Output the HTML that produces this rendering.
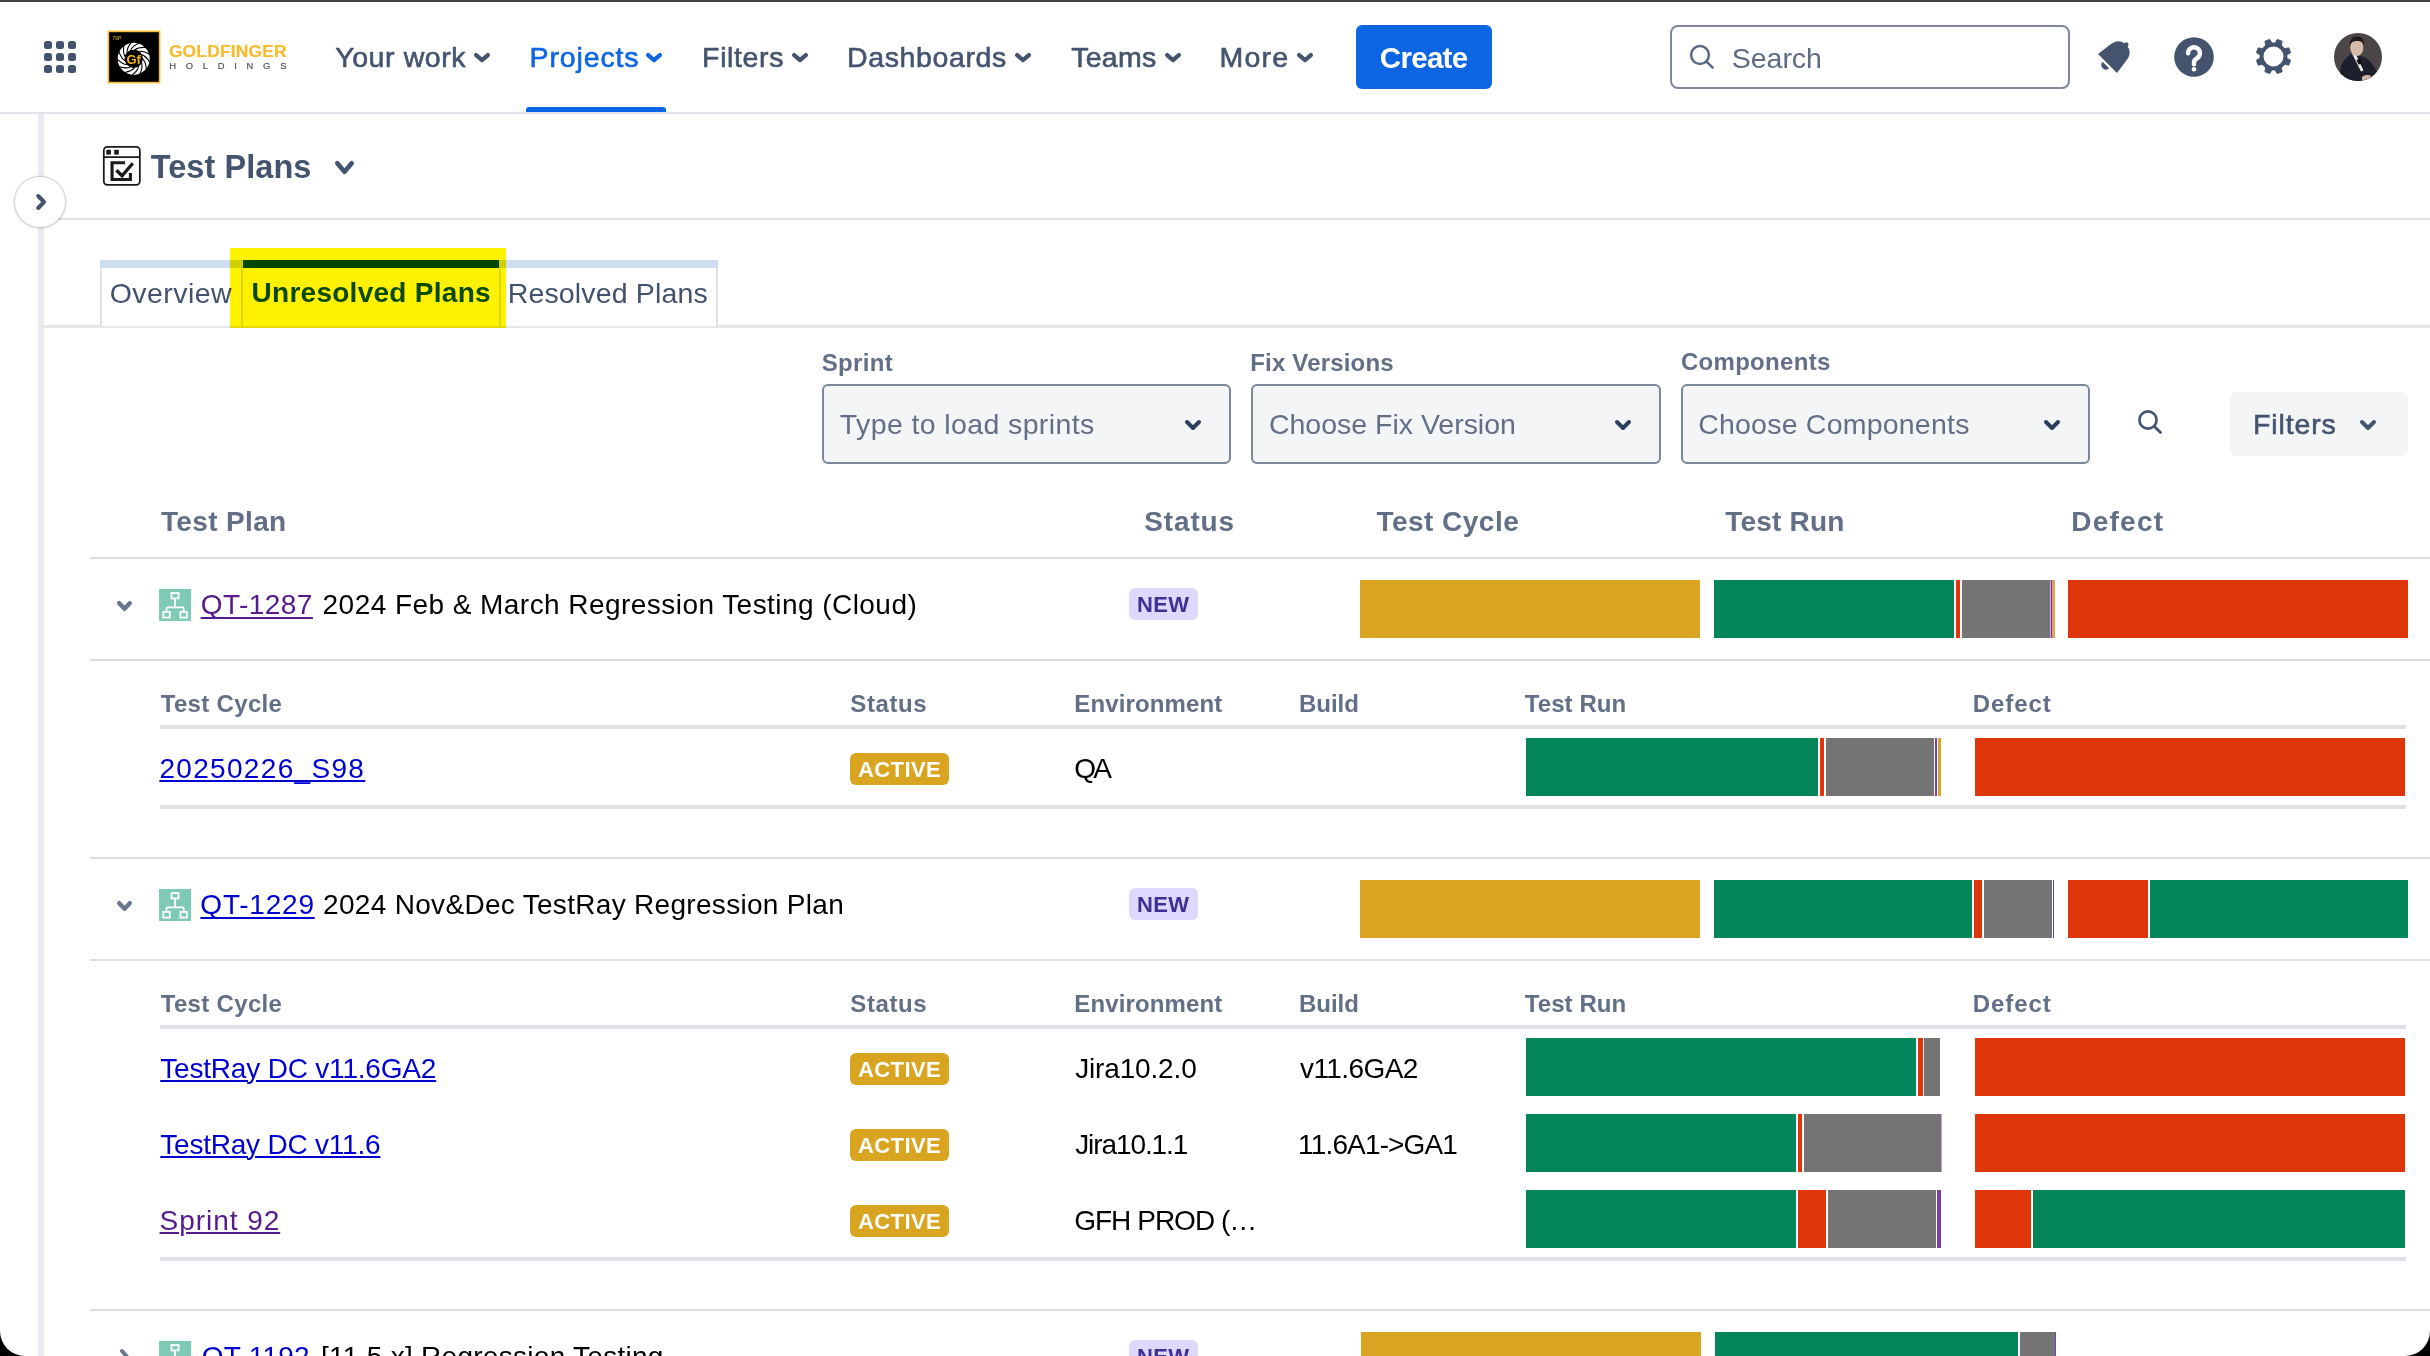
<!DOCTYPE html>
<html><head><meta charset="utf-8"><title>Test Plans</title>
<style>
html,body{margin:0;padding:0;}
body{width:2430px;height:1356px;overflow:hidden;background:#000;font-family:"Liberation Sans",sans-serif;}
#pg{position:absolute;left:0;top:0;width:2430px;height:1356px;background:#fff;overflow:hidden;border-radius:0 0 25px 25px;}
.t{position:absolute;line-height:1;white-space:nowrap;}
.r{position:absolute;}
.med{-webkit-text-stroke:0.6px currentColor;}
</style></head><body><div id="pg">
<div class="r" style="left:0px;top:0px;width:2430px;height:2px;background:#424242;"></div>
<div class="r" style="left:44px;top:41px;width:8px;height:8px;background:#44546f;border-radius:2.5px;"></div>
<div class="r" style="left:44px;top:53px;width:8px;height:8px;background:#44546f;border-radius:2.5px;"></div>
<div class="r" style="left:44px;top:65px;width:8px;height:8px;background:#44546f;border-radius:2.5px;"></div>
<div class="r" style="left:56px;top:41px;width:8px;height:8px;background:#44546f;border-radius:2.5px;"></div>
<div class="r" style="left:56px;top:53px;width:8px;height:8px;background:#44546f;border-radius:2.5px;"></div>
<div class="r" style="left:56px;top:65px;width:8px;height:8px;background:#44546f;border-radius:2.5px;"></div>
<div class="r" style="left:68px;top:41px;width:8px;height:8px;background:#44546f;border-radius:2.5px;"></div>
<div class="r" style="left:68px;top:53px;width:8px;height:8px;background:#44546f;border-radius:2.5px;"></div>
<div class="r" style="left:68px;top:65px;width:8px;height:8px;background:#44546f;border-radius:2.5px;"></div>
<svg class="r" style="left:107px;top:30px" width="54" height="54" viewBox="0 0 54 54">
<rect x="1.4" y="1.4" width="51.2" height="51.2" fill="#000" stroke="#f5bb32" stroke-width="1.6"/>
<text x="5.5" y="9.5" font-family="Liberation Sans" font-size="5" font-weight="700" fill="#a8852e">79P</text>
<circle cx="26.7" cy="28.7" r="12.5" fill="none" stroke="#fff" stroke-width="7"/>
<path d="M35.50 28.70 Q38.83 31.72 39.34 39.31 M34.49 32.79 Q36.03 37.01 32.96 43.97 M31.70 35.94 Q31.10 40.40 25.15 45.13 M27.76 37.44 Q25.16 41.10 17.69 42.53 M23.58 36.93 Q19.57 38.97 12.30 36.76 M20.11 34.54 Q15.62 34.48 10.21 29.14 M18.16 30.81 Q14.20 28.67 11.89 21.43 M18.16 26.59 Q15.65 22.86 16.97 15.38 M20.11 22.86 Q19.63 18.39 24.27 12.38 M23.58 20.47 Q25.23 16.29 32.13 13.12 M27.76 19.96 Q31.16 17.02 38.75 17.43 M31.70 21.46 Q36.08 20.44 42.61 24.32 M34.49 24.61 Q38.84 25.74 42.82 32.22" fill="none" stroke="#000" stroke-width="1.1"/>
<circle cx="26.7" cy="28.7" r="9" fill="#000"/>
<text x="26.7" y="34" text-anchor="middle" font-family="Liberation Sans" font-size="13" font-weight="700" fill="#f2b321">Gf</text>
</svg>
<div class="t " style="left:168.9px;top:43.47px;font-size:17.4px;color:#f7bb2c;font-weight:700;letter-spacing:0.197px;-webkit-text-stroke:0.2px #f7bb2c;">GOLDFINGER</div>
<div class="t " style="left:169.15px;top:61.24px;font-size:9.4px;color:#4d4d4d;letter-spacing:9.758px;-webkit-text-stroke:0.15px #4d4d4d;">HOLDINGS</div>
<div class="t med" style="left:335.19px;top:42.87px;font-size:28.5px;color:#44546f;letter-spacing:0.591px;">Your work</div>
<svg class="r" style="left:470px;top:49px" width="24" height="17.200000000000003" viewBox="-4 -4 24 17.200000000000003"><path d="M2.1 2.1 L8.0 7.100000000000003 L13.9 2.1" fill="none" stroke="#44546f" stroke-width="4.2" stroke-linecap="round" stroke-linejoin="round"/></svg>
<div class="t med" style="left:529.62px;top:42.87px;font-size:28.5px;color:#0c66e4;letter-spacing:0.856px;">Projects</div>
<svg class="r" style="left:642px;top:49px" width="24" height="17.200000000000003" viewBox="-4 -4 24 17.200000000000003"><path d="M2.1 2.1 L8.0 7.100000000000003 L13.9 2.1" fill="none" stroke="#0c66e4" stroke-width="4.2" stroke-linecap="round" stroke-linejoin="round"/></svg>
<div class="r" style="left:526px;top:107px;width:140px;height:6px;background:#0c66e4;border-radius:3px 3px 0 0;"></div>
<div class="t med" style="left:702.12px;top:42.87px;font-size:28.5px;color:#44546f;letter-spacing:0.626px;">Filters</div>
<svg class="r" style="left:788px;top:49px" width="24" height="17.200000000000003" viewBox="-4 -4 24 17.200000000000003"><path d="M2.1 2.1 L8.0 7.100000000000003 L13.9 2.1" fill="none" stroke="#44546f" stroke-width="4.2" stroke-linecap="round" stroke-linejoin="round"/></svg>
<div class="t med" style="left:847.02px;top:42.87px;font-size:28.5px;color:#44546f;letter-spacing:0.618px;">Dashboards</div>
<svg class="r" style="left:1011px;top:49px" width="24" height="17.200000000000003" viewBox="-4 -4 24 17.200000000000003"><path d="M2.1 2.1 L8.0 7.100000000000003 L13.9 2.1" fill="none" stroke="#44546f" stroke-width="4.2" stroke-linecap="round" stroke-linejoin="round"/></svg>
<div class="t med" style="left:1071.23px;top:42.87px;font-size:28.5px;color:#44546f;letter-spacing:0.259px;">Teams</div>
<svg class="r" style="left:1161px;top:49px" width="24" height="17.200000000000003" viewBox="-4 -4 24 17.200000000000003"><path d="M2.1 2.1 L8.0 7.100000000000003 L13.9 2.1" fill="none" stroke="#44546f" stroke-width="4.2" stroke-linecap="round" stroke-linejoin="round"/></svg>
<div class="t med" style="left:1219.52px;top:42.87px;font-size:28.5px;color:#44546f;letter-spacing:1.208px;">More</div>
<svg class="r" style="left:1292.5px;top:49px" width="24.0" height="17.200000000000003" viewBox="-4 -4 24.0 17.200000000000003"><path d="M2.1 2.1 L8.0 7.100000000000003 L13.9 2.1" fill="none" stroke="#44546f" stroke-width="4.2" stroke-linecap="round" stroke-linejoin="round"/></svg>
<div class="r" style="left:1356px;top:25px;width:136px;height:64px;background:#0c66e4;border-radius:6px;"></div>
<div class="t " style="left:1379.82px;top:42.53px;font-size:29.5px;color:#fff;font-weight:700;letter-spacing:-0.706px;">Create</div>
<div class="r" style="left:1670px;top:25px;width:400px;height:64px;box-sizing:border-box;border:2px solid #7f899b;border-radius:8px;background:#fff"></div>
<svg class="r" style="left:1686px;top:41px" width="32" height="32" viewBox="0 0 32 32"><circle cx="14" cy="14" r="8.9" fill="none" stroke="#5b6a83" stroke-width="2.5"/><path d="M20.6 20.6 L26.6 26.6" stroke="#5b6a83" stroke-width="2.6" stroke-linecap="round"/></svg>
<div class="t " style="left:1731.72px;top:43.87px;font-size:28.5px;color:#5e6b82;letter-spacing:-0.014px;">Search</div>
<svg class="r" style="left:2090px;top:34px" width="50" height="46" viewBox="0 0 50 46"><g transform="translate(17.5 29.4) rotate(45)" fill="#44546f">
<path d="M-13.4 0 L13.4 0 L11.4 -14.5 C11 -22.5 6.5 -26.3 0 -26.3 C-6.5 -26.3 -11 -22.5 -11.4 -14.5 Z"/>
<circle cx="0" cy="-26.5" r="2.3"/>
<path d="M-4.6 2.3 A4.6 4.6 0 0 0 4.6 2.3 Z"/></g></svg>
<svg class="r" style="left:2174px;top:37px" width="40" height="40" viewBox="0 0 40 40"><circle cx="20" cy="20" r="19.8" fill="#44546f"/>
<path d="M14.1 16.3 A5.9 5.9 0 1 1 23.2 21.2 C21 22.6 20 23.3 20 25.2 L20 27.2" fill="none" stroke="#fff" stroke-width="4.4" stroke-linecap="round"/>
<circle cx="20" cy="32.2" r="2.3" fill="#fff"/></svg>
<svg class="r" style="left:2250px;top:34px" width="47" height="45" viewBox="0 0 47 45"><g fill="#44546f" stroke="#44546f" stroke-width="0.8" stroke-linejoin="round"><path d="M33.41 14.84 L38.81 13.84 L40.68 18.69 L35.99 21.56 Z M35.99 23.44 L40.68 26.31 L38.81 31.16 L33.41 30.16 Z M31.16 32.41 L32.16 37.81 L27.31 39.68 L24.44 34.99 Z M22.56 34.99 L19.69 39.68 L14.84 37.81 L15.84 32.41 Z M13.59 30.16 L8.19 31.16 L6.32 26.31 L11.01 23.44 Z M11.01 21.56 L6.32 18.69 L8.19 13.84 L13.59 14.84 Z M15.84 12.59 L14.84 7.19 L19.69 5.32 L22.56 10.01 Z M24.44 10.01 L27.31 5.32 L32.16 7.19 L31.16 12.59 Z"/></g>
<circle cx="23.5" cy="22.5" r="11.95" fill="none" stroke="#44546f" stroke-width="3.9"/></svg>
<svg class="r" style="left:2334px;top:33px" width="48" height="48" viewBox="0 0 48 48"><defs><clipPath id="av"><circle cx="24" cy="24" r="24"/></clipPath></defs>
<g clip-path="url(#av)"><rect width="48" height="48" fill="#4a4648"/>
<path d="M5 48 L7 33 C10 26 15 22 19 20.5 L31 24.5 C36 27 40 33 44 40 L44 48 Z" fill="#1e1f2c"/>
<path d="M18 20.5 L21.5 20.5 L29.5 37.5 L27 38.5 Z" fill="#e9e8ee"/>
<path d="M22.5 27 L26.5 25.5 L27.5 31 L24.5 31.5 Z" fill="#111"/>
<ellipse cx="22.8" cy="14.3" rx="6.6" ry="8.6" fill="#d7bba8"/>
<path d="M15.8 14 C15 6 19 3.5 23 3.5 C28 3.5 31 6.5 30 14 C29.5 9.5 27.5 8 23 8 C18.5 8 16.5 10 15.8 14 Z" fill="#231c1a"/>
<path d="M28 44 C31 41.5 35 41.5 37 43 L36 48 L28 48 Z" fill="#cfb3a3"/>
</g></svg>
<div class="r" style="left:0px;top:112px;width:2430px;height:2px;background:#e1e3e8;"></div>
<div class="r" style="left:38px;top:114px;width:6px;height:1242px;background:#ebecf0;"></div>
<svg class="r" style="left:102px;top:145px" width="40" height="42" viewBox="0 0 40 42">
<rect x="1.8" y="1.75" width="36.05" height="38.1" rx="3.6" fill="#fff" stroke="#1a1a1a" stroke-width="1.75"/>
<path d="M1.8 12.1 H37.85" stroke="#1a1a1a" stroke-width="1.8"/>
<rect x="4.3" y="4.8" width="4.6" height="4.8" fill="#1a1a1a"/><rect x="12.2" y="4.8" width="4.6" height="4.8" fill="#1a1a1a"/>
<path d="M23.1 17.75 H10.05 V34.45 H28.4 V28" fill="none" stroke="#1a1a1a" stroke-width="3.1"/>
<path d="M14.4 25.2 L20.1 30.8 L30.8 18.3" fill="none" stroke="#1a1a1a" stroke-width="3.3"/>
</svg>
<div class="t " style="left:150.68px;top:151.49px;font-size:32.5px;color:#44546f;font-weight:700;letter-spacing:0.062px;">Test Plans</div>
<svg class="r" style="left:330.5px;top:156.5px" width="27.0" height="21.0" viewBox="-4 -4 27.0 21.0"><path d="M2.3 2.3 L9.5 10.7 L16.7 2.3" fill="none" stroke="#44546f" stroke-width="4.6" stroke-linecap="round" stroke-linejoin="round"/></svg>
<div class="r" style="left:40px;top:218px;width:2390px;height:2px;background:#e1e3e8;"></div>
<div class="r" style="left:15px;top:177px;width:50px;height:50px;border-radius:50%;background:#fff;box-shadow:0 0 0 1.5px rgba(30,30,60,0.13),0 1px 3px 1px rgba(9,30,66,0.07)"></div>
<svg class="r" style="left:32px;top:192px" width="16" height="20" viewBox="0 0 16 20"><path d="M6.2 4 L12 10 L6.2 16" fill="none" stroke="#44546f" stroke-width="4" stroke-linecap="round" stroke-linejoin="round"/></svg>
<div class="r" style="left:40px;top:325px;width:2390px;height:3px;background:#e4e6ea;"></div>
<div class="r" style="left:100px;top:260px;width:618px;height:68px;background:#fff;"></div>
<div class="r" style="left:100px;top:260px;width:618px;height:8px;background:#cfdcf1;"></div>
<div class="r" style="left:100px;top:268px;width:2px;height:60px;background:#dfe1e6;"></div>
<div class="r" style="left:716px;top:268px;width:2px;height:60px;background:#dfe1e6;"></div>
<div class="r" style="left:100px;top:326px;width:618px;height:2px;background:#e4e6ea;"></div>
<div class="r" style="left:241px;top:268px;width:2px;height:60px;background:#dfe1e6;"></div>
<div class="r" style="left:499px;top:268px;width:2px;height:60px;background:#dfe1e6;"></div>
<div class="r" style="left:243px;top:260px;width:256px;height:8px;background:#004c00;"></div>
<div class="t " style="left:109.72px;top:278.87px;font-size:28.5px;color:#42526e;letter-spacing:0.434px;">Overview</div>
<div class="t " style="left:251.52px;top:279.10px;font-size:28px;color:#0a4e0a;font-weight:700;letter-spacing:0.272px;">Unresolved Plans</div>
<div class="t " style="left:507.72px;top:278.87px;font-size:28.5px;color:#42526e;letter-spacing:0.146px;">Resolved Plans</div>
<div class="r" style="left:230px;top:248px;width:276px;height:80px;background:#fff200;mix-blend-mode:multiply;"></div>
<div class="t " style="left:821.78px;top:350.68px;font-size:24px;color:#626f86;font-weight:700;letter-spacing:0.344px;">Sprint</div>
<div class="t " style="left:1250.24px;top:350.68px;font-size:24px;color:#626f86;font-weight:700;letter-spacing:0.178px;">Fix Versions</div>
<div class="t " style="left:1680.94px;top:350.48px;font-size:24px;color:#626f86;font-weight:700;letter-spacing:0.298px;">Components</div>
<div class="r" style="left:822px;top:384px;width:409px;height:80px;box-sizing:border-box;border:2px solid #7d879a;border-radius:6px;background:#f4f5f7"></div>
<div class="t " style="left:839.83px;top:410.07px;font-size:28.5px;color:#626f86;letter-spacing:0.383px;">Type to load sprints</div>
<svg class="r" style="left:1181px;top:416px" width="24" height="18" viewBox="-4 -4 24 18"><path d="M2.0 2.0 L8.0 8.0 L14.0 2.0" fill="none" stroke="#2c3e5d" stroke-width="4" stroke-linecap="round" stroke-linejoin="round"/></svg>
<div class="r" style="left:1251px;top:384px;width:410px;height:80px;box-sizing:border-box;border:2px solid #7d879a;border-radius:6px;background:#f4f5f7"></div>
<div class="t " style="left:1268.98px;top:410.07px;font-size:28.5px;color:#626f86;letter-spacing:-0.013px;">Choose Fix Version</div>
<svg class="r" style="left:1611px;top:416px" width="24" height="18" viewBox="-4 -4 24 18"><path d="M2.0 2.0 L8.0 8.0 L14.0 2.0" fill="none" stroke="#2c3e5d" stroke-width="4" stroke-linecap="round" stroke-linejoin="round"/></svg>
<div class="r" style="left:1681px;top:384px;width:409px;height:80px;box-sizing:border-box;border:2px solid #7d879a;border-radius:6px;background:#f4f5f7"></div>
<div class="t " style="left:1698.18px;top:410.07px;font-size:28.5px;color:#626f86;letter-spacing:0.217px;">Choose Components</div>
<svg class="r" style="left:2040px;top:416px" width="24" height="18" viewBox="-4 -4 24 18"><path d="M2.0 2.0 L8.0 8.0 L14.0 2.0" fill="none" stroke="#2c3e5d" stroke-width="4" stroke-linecap="round" stroke-linejoin="round"/></svg>
<svg class="r" style="left:2134px;top:406px" width="32" height="32" viewBox="0 0 32 32"><circle cx="14" cy="14" r="8.6" fill="none" stroke="#44546f" stroke-width="2.6"/><path d="M20.2 20.2 L26.5 26.5" stroke="#44546f" stroke-width="2.8" stroke-linecap="round"/></svg>
<div class="r" style="left:2230px;top:392px;width:178px;height:64px;background:#f4f5f7;border-radius:6px;"></div>
<div class="t med" style="left:2253.02px;top:409.87px;font-size:28.5px;color:#44546f;letter-spacing:0.860px;">Filters</div>
<svg class="r" style="left:2356px;top:416px" width="24" height="18" viewBox="-4 -4 24 18"><path d="M2.0 2.0 L8.0 8.0 L14.0 2.0" fill="none" stroke="#44546f" stroke-width="4" stroke-linecap="round" stroke-linejoin="round"/></svg>
<div class="t " style="left:160.92px;top:507.60px;font-size:28px;color:#626f86;font-weight:700;letter-spacing:0.363px;">Test Plan</div>
<div class="t " style="left:1144.16px;top:507.60px;font-size:28px;color:#626f86;font-weight:700;letter-spacing:0.884px;">Status</div>
<div class="t " style="left:1376.42px;top:507.60px;font-size:28px;color:#626f86;font-weight:700;letter-spacing:0.484px;">Test Cycle</div>
<div class="t " style="left:1725.32px;top:507.60px;font-size:28px;color:#626f86;font-weight:700;letter-spacing:0.203px;">Test Run</div>
<div class="t " style="left:2071.18px;top:507.60px;font-size:28px;color:#626f86;font-weight:700;letter-spacing:1.272px;">Defect</div>
<div class="r" style="left:90px;top:557px;width:2340px;height:2px;background:#dcdddf;"></div>
<svg class="r" style="left:112.5px;top:597px" width="23.0" height="18" viewBox="-4 -4 23.0 18"><path d="M2.2 2.2 L7.5 7.8 L12.8 2.2" fill="none" stroke="#6b778c" stroke-width="4.4" stroke-linecap="round" stroke-linejoin="round"/></svg>
<svg class="r" style="left:159px;top:589px" width="32" height="32" viewBox="0 0 32 32"><rect width="32" height="32" fill="#7ecab5"/>
<g fill="none" stroke="#fff" stroke-width="1.8"><rect x="12.5" y="4.1" width="7.1" height="5.3"/><path d="M16.05 9.4 V18.3"/><path d="M7.5 22.9 V19.6 Q7.5 18.3 8.8 18.3 H23.4 Q24.7 18.3 24.7 19.6 V22.9"/>
<rect x="4.3" y="22.9" width="6.5" height="5.7"/><rect x="21.4" y="22.9" width="6.5" height="5.7"/></g></svg>
<div class="t " style="left:200.64px;top:590.60px;font-size:28px;color:#551a8b;letter-spacing:0.473px;text-decoration:underline;text-decoration-thickness:2px;text-underline-offset:2.5px;text-decoration-skip-ink:none;">QT-1287</div>
<div class="t " style="left:322.6px;top:590.60px;font-size:28px;color:#000;letter-spacing:0.448px;">2024 Feb &amp; March Regression Testing (Cloud)</div>
<div class="r" style="left:1129px;top:588px;width:69px;height:32px;border-radius:6px;background:#dfd8fd"></div>
<div class="t " style="left:1137.07px;top:593.87px;font-size:22px;color:#403294;font-weight:700;letter-spacing:0.280px;">NEW</div>
<div class="r" style="left:1360px;top:580px;width:340px;height:58px;background:#d9a521;"></div>
<div class="r" style="left:1714px;top:580px;width:240px;height:58px;background:#03875a;"></div>
<div class="r" style="left:1956px;top:580px;width:4px;height:58px;background:#de350b;"></div>
<div class="r" style="left:1962px;top:580px;width:88px;height:58px;background:#747474;"></div>
<div class="r" style="left:2050px;top:580px;width:1px;height:58px;background:#d9a8e2;"></div>
<div class="r" style="left:2051px;top:580px;width:1px;height:58px;background:#6f3290;"></div>
<div class="r" style="left:2052px;top:580px;width:3px;height:58px;background:#e3a25c;"></div>
<div class="r" style="left:2068px;top:580px;width:340px;height:58px;background:#de350b;"></div>
<div class="r" style="left:90px;top:557px;width:2340px;height:2px;background:#dcdddf;"></div>
<div class="r" style="left:90px;top:659px;width:2340px;height:2px;background:#dcdddf;"></div>
<div class="t " style="left:160.76px;top:691.68px;font-size:24px;color:#626f86;font-weight:700;letter-spacing:0.320px;">Test Cycle</div>
<div class="t " style="left:850.28px;top:691.68px;font-size:24px;color:#626f86;font-weight:700;letter-spacing:0.612px;">Status</div>
<div class="t " style="left:1074.24px;top:691.68px;font-size:24px;color:#626f86;font-weight:700;letter-spacing:0.136px;">Environment</div>
<div class="t " style="left:1298.94px;top:691.68px;font-size:24px;color:#626f86;font-weight:700;letter-spacing:-0.020px;">Build</div>
<div class="t " style="left:1524.76px;top:691.68px;font-size:24px;color:#626f86;font-weight:700;letter-spacing:0.080px;">Test Run</div>
<div class="t " style="left:1972.84px;top:691.68px;font-size:24px;color:#626f86;font-weight:700;letter-spacing:0.896px;">Defect</div>
<div class="r" style="left:160px;top:725px;width:2246px;height:4px;background:#dfe1e6;"></div>
<div class="t " style="left:159.4px;top:754.80px;font-size:28px;color:#0000d0;letter-spacing:1.322px;text-decoration:underline;text-decoration-thickness:2px;text-underline-offset:2px;">20250226_S98</div>
<div class="r" style="left:850px;top:753px;width:99px;height:32px;border-radius:6px;background:#d9a521"></div>
<div class="t " style="left:858.05px;top:758.87px;font-size:22px;color:#fff;font-weight:700;letter-spacing:0.398px;">ACTIVE</div>
<div class="t " style="left:1074.34px;top:754.80px;font-size:28px;color:#000;letter-spacing:-2.800px;">QA</div>
<div class="r" style="left:1526px;top:738px;width:292px;height:58px;background:#03875a;"></div>
<div class="r" style="left:1820px;top:738px;width:4px;height:58px;background:#de350b;"></div>
<div class="r" style="left:1826px;top:738px;width:108px;height:58px;background:#747474;"></div>
<div class="r" style="left:1935px;top:738px;width:2px;height:58px;background:#7b3fa6;"></div>
<div class="r" style="left:1938px;top:738px;width:3px;height:58px;background:#d9a521;"></div>
<div class="r" style="left:1975px;top:738px;width:430px;height:58px;background:#de350b;"></div>
<div class="r" style="left:160px;top:805px;width:2246px;height:4px;background:#dfe1e6;"></div>
<svg class="r" style="left:112.5px;top:897px" width="23.0" height="18" viewBox="-4 -4 23.0 18"><path d="M2.2 2.2 L7.5 7.8 L12.8 2.2" fill="none" stroke="#6b778c" stroke-width="4.4" stroke-linecap="round" stroke-linejoin="round"/></svg>
<svg class="r" style="left:159px;top:889px" width="32" height="32" viewBox="0 0 32 32"><rect width="32" height="32" fill="#7ecab5"/>
<g fill="none" stroke="#fff" stroke-width="1.8"><rect x="12.5" y="4.1" width="7.1" height="5.3"/><path d="M16.05 9.4 V18.3"/><path d="M7.5 22.9 V19.6 Q7.5 18.3 8.8 18.3 H23.4 Q24.7 18.3 24.7 19.6 V22.9"/>
<rect x="4.3" y="22.9" width="6.5" height="5.7"/><rect x="21.4" y="22.9" width="6.5" height="5.7"/></g></svg>
<div class="t " style="left:200.34px;top:890.60px;font-size:28px;color:#0000d0;letter-spacing:0.783px;text-decoration:underline;text-decoration-thickness:2px;text-underline-offset:2.5px;text-decoration-skip-ink:none;">QT-1229</div>
<div class="t " style="left:323.1px;top:890.60px;font-size:28px;color:#000;letter-spacing:0.306px;">2024 Nov&amp;Dec TestRay Regression Plan</div>
<div class="r" style="left:1129px;top:888px;width:69px;height:32px;border-radius:6px;background:#dfd8fd"></div>
<div class="t " style="left:1137.07px;top:893.87px;font-size:22px;color:#403294;font-weight:700;letter-spacing:0.280px;">NEW</div>
<div class="r" style="left:1360px;top:880px;width:340px;height:58px;background:#d9a521;"></div>
<div class="r" style="left:1714px;top:880px;width:258px;height:58px;background:#03875a;"></div>
<div class="r" style="left:1974px;top:880px;width:8px;height:58px;background:#de350b;"></div>
<div class="r" style="left:1984px;top:880px;width:68px;height:58px;background:#747474;"></div>
<div class="r" style="left:2053px;top:880px;width:1px;height:58px;background:#7b3fa6;"></div>
<div class="r" style="left:2068px;top:880px;width:80px;height:58px;background:#de350b;"></div>
<div class="r" style="left:2150px;top:880px;width:258px;height:58px;background:#03875a;"></div>
<div class="r" style="left:90px;top:857px;width:2340px;height:2px;background:#dcdddf;"></div>
<div class="r" style="left:90px;top:959px;width:2340px;height:2px;background:#dcdddf;"></div>
<div class="t " style="left:160.76px;top:991.68px;font-size:24px;color:#626f86;font-weight:700;letter-spacing:0.320px;">Test Cycle</div>
<div class="t " style="left:850.28px;top:991.68px;font-size:24px;color:#626f86;font-weight:700;letter-spacing:0.612px;">Status</div>
<div class="t " style="left:1074.24px;top:991.68px;font-size:24px;color:#626f86;font-weight:700;letter-spacing:0.136px;">Environment</div>
<div class="t " style="left:1298.94px;top:991.68px;font-size:24px;color:#626f86;font-weight:700;letter-spacing:-0.020px;">Build</div>
<div class="t " style="left:1524.76px;top:991.68px;font-size:24px;color:#626f86;font-weight:700;letter-spacing:0.080px;">Test Run</div>
<div class="t " style="left:1972.84px;top:991.68px;font-size:24px;color:#626f86;font-weight:700;letter-spacing:0.896px;">Defect</div>
<div class="r" style="left:160px;top:1025px;width:2246px;height:4px;background:#dfe1e6;"></div>
<div class="t " style="left:160.24px;top:1054.80px;font-size:28px;color:#0000d0;letter-spacing:-0.190px;text-decoration:underline;text-decoration-thickness:2px;text-underline-offset:2px;">TestRay DC v11.6GA2</div>
<div class="r" style="left:850px;top:1053px;width:99px;height:32px;border-radius:6px;background:#d9a521"></div>
<div class="t " style="left:858.05px;top:1058.87px;font-size:22px;color:#fff;font-weight:700;letter-spacing:0.398px;">ACTIVE</div>
<div class="t " style="left:1075.18px;top:1054.80px;font-size:28px;color:#000;letter-spacing:-0.158px;">Jira10.2.0</div>
<div class="t " style="left:1300.06px;top:1054.80px;font-size:28px;color:#000;letter-spacing:-0.589px;">v11.6GA2</div>
<div class="r" style="left:1526px;top:1038px;width:390px;height:58px;background:#03875a;"></div>
<div class="r" style="left:1918px;top:1038px;width:5px;height:58px;background:#de350b;"></div>
<div class="r" style="left:1924px;top:1038px;width:16px;height:58px;background:#747474;"></div>
<div class="r" style="left:1975px;top:1038px;width:430px;height:58px;background:#de350b;"></div>
<div class="t " style="left:160.24px;top:1130.80px;font-size:28px;color:#0000d0;letter-spacing:-0.213px;text-decoration:underline;text-decoration-thickness:2px;text-underline-offset:2px;">TestRay DC v11.6</div>
<div class="r" style="left:850px;top:1129px;width:99px;height:32px;border-radius:6px;background:#d9a521"></div>
<div class="t " style="left:858.05px;top:1134.87px;font-size:22px;color:#fff;font-weight:700;letter-spacing:0.398px;">ACTIVE</div>
<div class="t " style="left:1075.18px;top:1130.80px;font-size:28px;color:#000;letter-spacing:-1.093px;">Jira10.1.1</div>
<div class="t " style="left:1298.1px;top:1130.80px;font-size:28px;color:#000;letter-spacing:-0.852px;">11.6A1-&gt;GA1</div>
<div class="r" style="left:1526px;top:1114px;width:270px;height:58px;background:#03875a;"></div>
<div class="r" style="left:1798px;top:1114px;width:4px;height:58px;background:#de350b;"></div>
<div class="r" style="left:1804px;top:1114px;width:137px;height:58px;background:#747474;"></div>
<div class="r" style="left:1941px;top:1114px;width:1px;height:58px;background:#c9a0dc;"></div>
<div class="r" style="left:1975px;top:1114px;width:430px;height:58px;background:#de350b;"></div>
<div class="t " style="left:159.54px;top:1206.80px;font-size:28px;color:#551a8b;letter-spacing:0.957px;text-decoration:underline;text-decoration-thickness:2px;text-underline-offset:2px;">Sprint 92</div>
<div class="r" style="left:850px;top:1205px;width:99px;height:32px;border-radius:6px;background:#d9a521"></div>
<div class="t " style="left:858.05px;top:1210.87px;font-size:22px;color:#fff;font-weight:700;letter-spacing:0.398px;">ACTIVE</div>
<div class="t " style="left:1074.2px;top:1206.80px;font-size:28px;color:#000;letter-spacing:-0.974px;">GFH PROD (…</div>
<div class="r" style="left:1526px;top:1190px;width:270px;height:58px;background:#03875a;"></div>
<div class="r" style="left:1798px;top:1190px;width:28px;height:58px;background:#de350b;"></div>
<div class="r" style="left:1828px;top:1190px;width:108px;height:58px;background:#747474;"></div>
<div class="r" style="left:1937px;top:1190px;width:4px;height:58px;background:#7b3fa6;"></div>
<div class="r" style="left:1975px;top:1190px;width:56px;height:58px;background:#de350b;"></div>
<div class="r" style="left:2033px;top:1190px;width:372px;height:58px;background:#03875a;"></div>
<div class="r" style="left:160px;top:1257px;width:2246px;height:4px;background:#dfe1e6;"></div>
<svg class="r" style="left:116px;top:1347px" width="20" height="22" viewBox="0 0 20 22"><path d="M6 4 L12 11 L6 18" fill="none" stroke="#6b778c" stroke-width="4" stroke-linecap="round" stroke-linejoin="round"/></svg>
<svg class="r" style="left:159px;top:1341px" width="32" height="32" viewBox="0 0 32 32"><rect width="32" height="32" fill="#7ecab5"/>
<g fill="none" stroke="#fff" stroke-width="1.8"><rect x="12.5" y="4.1" width="7.1" height="5.3"/><path d="M16.05 9.4 V18.3"/><path d="M7.5 22.9 V19.6 Q7.5 18.3 8.8 18.3 H23.4 Q24.7 18.3 24.7 19.6 V22.9"/>
<rect x="4.3" y="22.9" width="6.5" height="5.7"/><rect x="21.4" y="22.9" width="6.5" height="5.7"/></g></svg>
<div class="t " style="left:201.74px;top:1342.60px;font-size:28px;color:#0000d0;letter-spacing:0.140px;text-decoration:underline;text-decoration-thickness:2px;text-underline-offset:2.5px;text-decoration-skip-ink:none;">QT-1192</div>
<div class="t " style="left:321.04px;top:1342.60px;font-size:28px;color:#000;letter-spacing:0.278px;">[11.5.x] Regression Testing</div>
<div class="r" style="left:1129px;top:1340px;width:69px;height:32px;border-radius:6px;background:#dfd8fd"></div>
<div class="t " style="left:1137.07px;top:1345.87px;font-size:22px;color:#403294;font-weight:700;letter-spacing:0.280px;">NEW</div>
<div class="r" style="left:1361px;top:1332px;width:340px;height:58px;background:#d9a521;"></div>
<div class="r" style="left:1715px;top:1332px;width:303px;height:58px;background:#03875a;"></div>
<div class="r" style="left:2020px;top:1332px;width:35px;height:58px;background:#747474;"></div>
<div class="r" style="left:2055px;top:1332px;width:1px;height:58px;background:#7b3fa6;"></div>
<div class="r" style="left:90px;top:1309px;width:2340px;height:2px;background:#dcdddf;"></div>
<div class="r" style="left:90px;top:1411px;width:2340px;height:2px;background:#dcdddf;"></div>
</div></body></html>
